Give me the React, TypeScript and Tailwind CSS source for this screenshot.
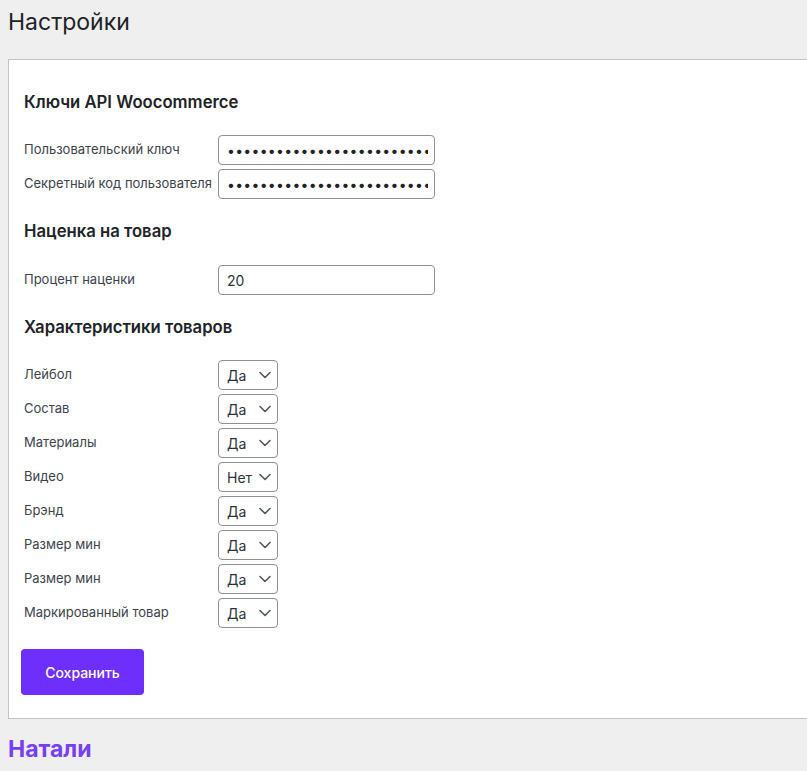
import React from "react";

const Chevron = () => (
  <svg width="12" height="8" viewBox="0 0 12 8" fill="none" className="shrink-0">
    <path d="M1 1.5L6 6.5L11 1.5" stroke="#50575e" strokeWidth="1.6" strokeLinecap="round" strokeLinejoin="round" />
  </svg>
);

const Row = ({ label, children }: { label: string; children: React.ReactNode }) => (
  <div className="flex h-[30px] items-center">
    <div className="w-[194px] text-[13px] text-[#3c434a]">{label}</div>
    {children}
  </div>
);

const Select = ({ value }: { value: string }) => (
  <div className="flex h-[30px] w-[60px] items-center justify-between rounded-[4px] border border-[#8c8f94] bg-white pl-[8px] pr-[6px] text-[14px] text-[#2c3338]">
    <span>{value}</span>
    <Chevron />
  </div>
);

const secret = "abcdefghijklmnopqrstuvwxyz0123456789abcdef";

export default function App() {
  const features: [string, string][] = [
    ["Лейбол", "Да"],
    ["Состав", "Да"],
    ["Материалы", "Да"],
    ["Видео", "Нет"],
    ["Брэнд", "Да"],
    ["Размер мин", "Да"],
    ["Размер мин", "Да"],
    ["Маркированный товар", "Да"],
  ];
  return (
    <div className="min-h-[771px] overflow-hidden bg-[#efefef] font-['Inter',sans-serif] text-[#1d2327]">
      <h1 className="px-2 pt-[6px] text-[23px] font-normal leading-8 text-[#1d2327]">Настройки</h1>
      <div className="ml-2 mt-[21px] border border-r-0 border-[#c3c4c7] bg-white px-[15px] pb-[23px] pt-[30px]">
        <h2 className="text-[16.7px] font-semibold leading-6">Ключи API Woocommerce</h2>
        <div className="mt-[21px] flex flex-col gap-[4px]">
          <Row label="Пользовательский ключ">
            <input
              type="password"
              readOnly
              value={secret}
              className="h-[30px] w-[217px] rounded-[4px] border border-[#8c8f94] bg-white pl-[8px] pr-[6px] text-[14px] tracking-[0.3px] text-[#1d2327] outline-none"
            />
          </Row>
          <Row label="Секретный код пользователя">
            <input
              type="password"
              readOnly
              value={secret}
              className="h-[30px] w-[217px] rounded-[4px] border border-[#8c8f94] bg-white pl-[8px] pr-[6px] text-[14px] tracking-[0.3px] text-[#1d2327] outline-none"
            />
          </Row>
        </div>
        <h2 className="mt-[20px] text-[16.7px] font-semibold leading-6">Наценка на товар</h2>
        <div className="mt-[22px]">
          <Row label="Процент наценки">
            <div className="flex h-[30px] w-[217px] items-center rounded-[4px] border border-[#8c8f94] pl-[8px] text-[14px] text-[#2c3338]">20</div>
          </Row>
        </div>
        <h2 className="mt-[20px] text-[16.7px] font-semibold leading-6">Характеристики товаров</h2>
        <div className="mt-[21px] flex flex-col gap-[4px]">
          {features.map(([l, v], i) => (
            <Row key={i} label={l}>
              <Select value={v} />
            </Row>
          ))}
        </div>
        <button className="-ml-[3px] mt-[21px] flex h-[46px] w-[123px] items-center justify-center rounded-[4px] bg-[#6e2ffc] text-[14px] font-medium text-white">
          Сохранить
        </button>
      </div>
      <div className="px-2 pt-[14px] text-[23px] font-bold leading-8 text-[#7540f6]">Натали</div>
    </div>
  );
}
